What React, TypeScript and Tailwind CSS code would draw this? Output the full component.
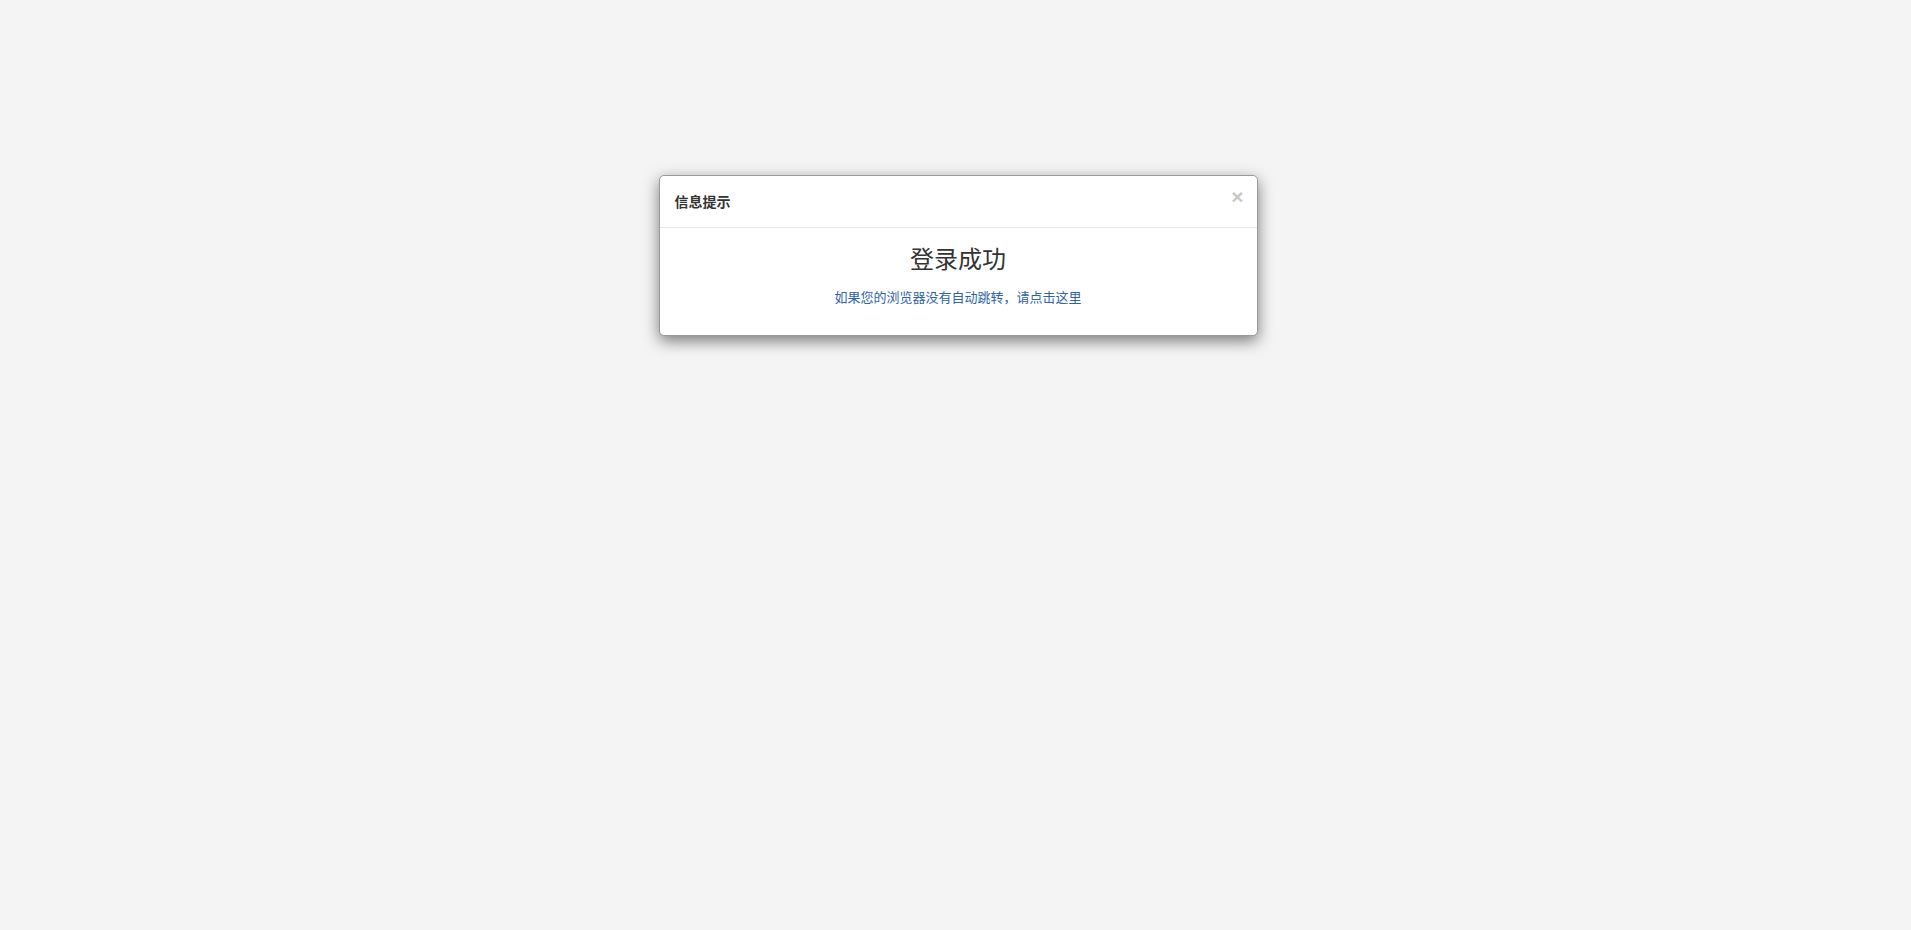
import React from 'react';

const FONT = '"Liberation Sans", "Noto Sans CJK SC", Arial, sans-serif';

export default function App() {
  return (
    <div className="min-h-screen w-full bg-[#f4f4f4] pl-[5px] pt-[175px]" style={{ fontFamily: FONT }}>
      <div className="mx-auto w-[599px] rounded-[5px] border border-[#9a9a9a] bg-white shadow-[0_5px_15px_rgba(0,0,0,0.5)]">
        {/* header */}
        <div className="flex h-[52px] items-center justify-between border-b border-[#e5e5e5] px-[15px]">
          <h4 className="text-[14px] font-bold leading-5 text-[#333]">信息提示</h4>
          <button className="-mr-[2px] -mt-[11px] text-[21px] font-bold leading-none text-[#c8c8c8]">×</button>
        </div>

        {/* body */}
        <div className="flex flex-col items-center px-[15px] pb-[27px] pt-[19px]">
          <h3 className="text-[24px] leading-[26px] text-[#333]">登录成功</h3>
          <a href="#" className="mt-[15px] text-[13px] leading-5 text-[#2f63a6]">
            如果您的浏览器没有自动跳转，请点击这里
          </a>
        </div>
      </div>
    </div>
  );
}
